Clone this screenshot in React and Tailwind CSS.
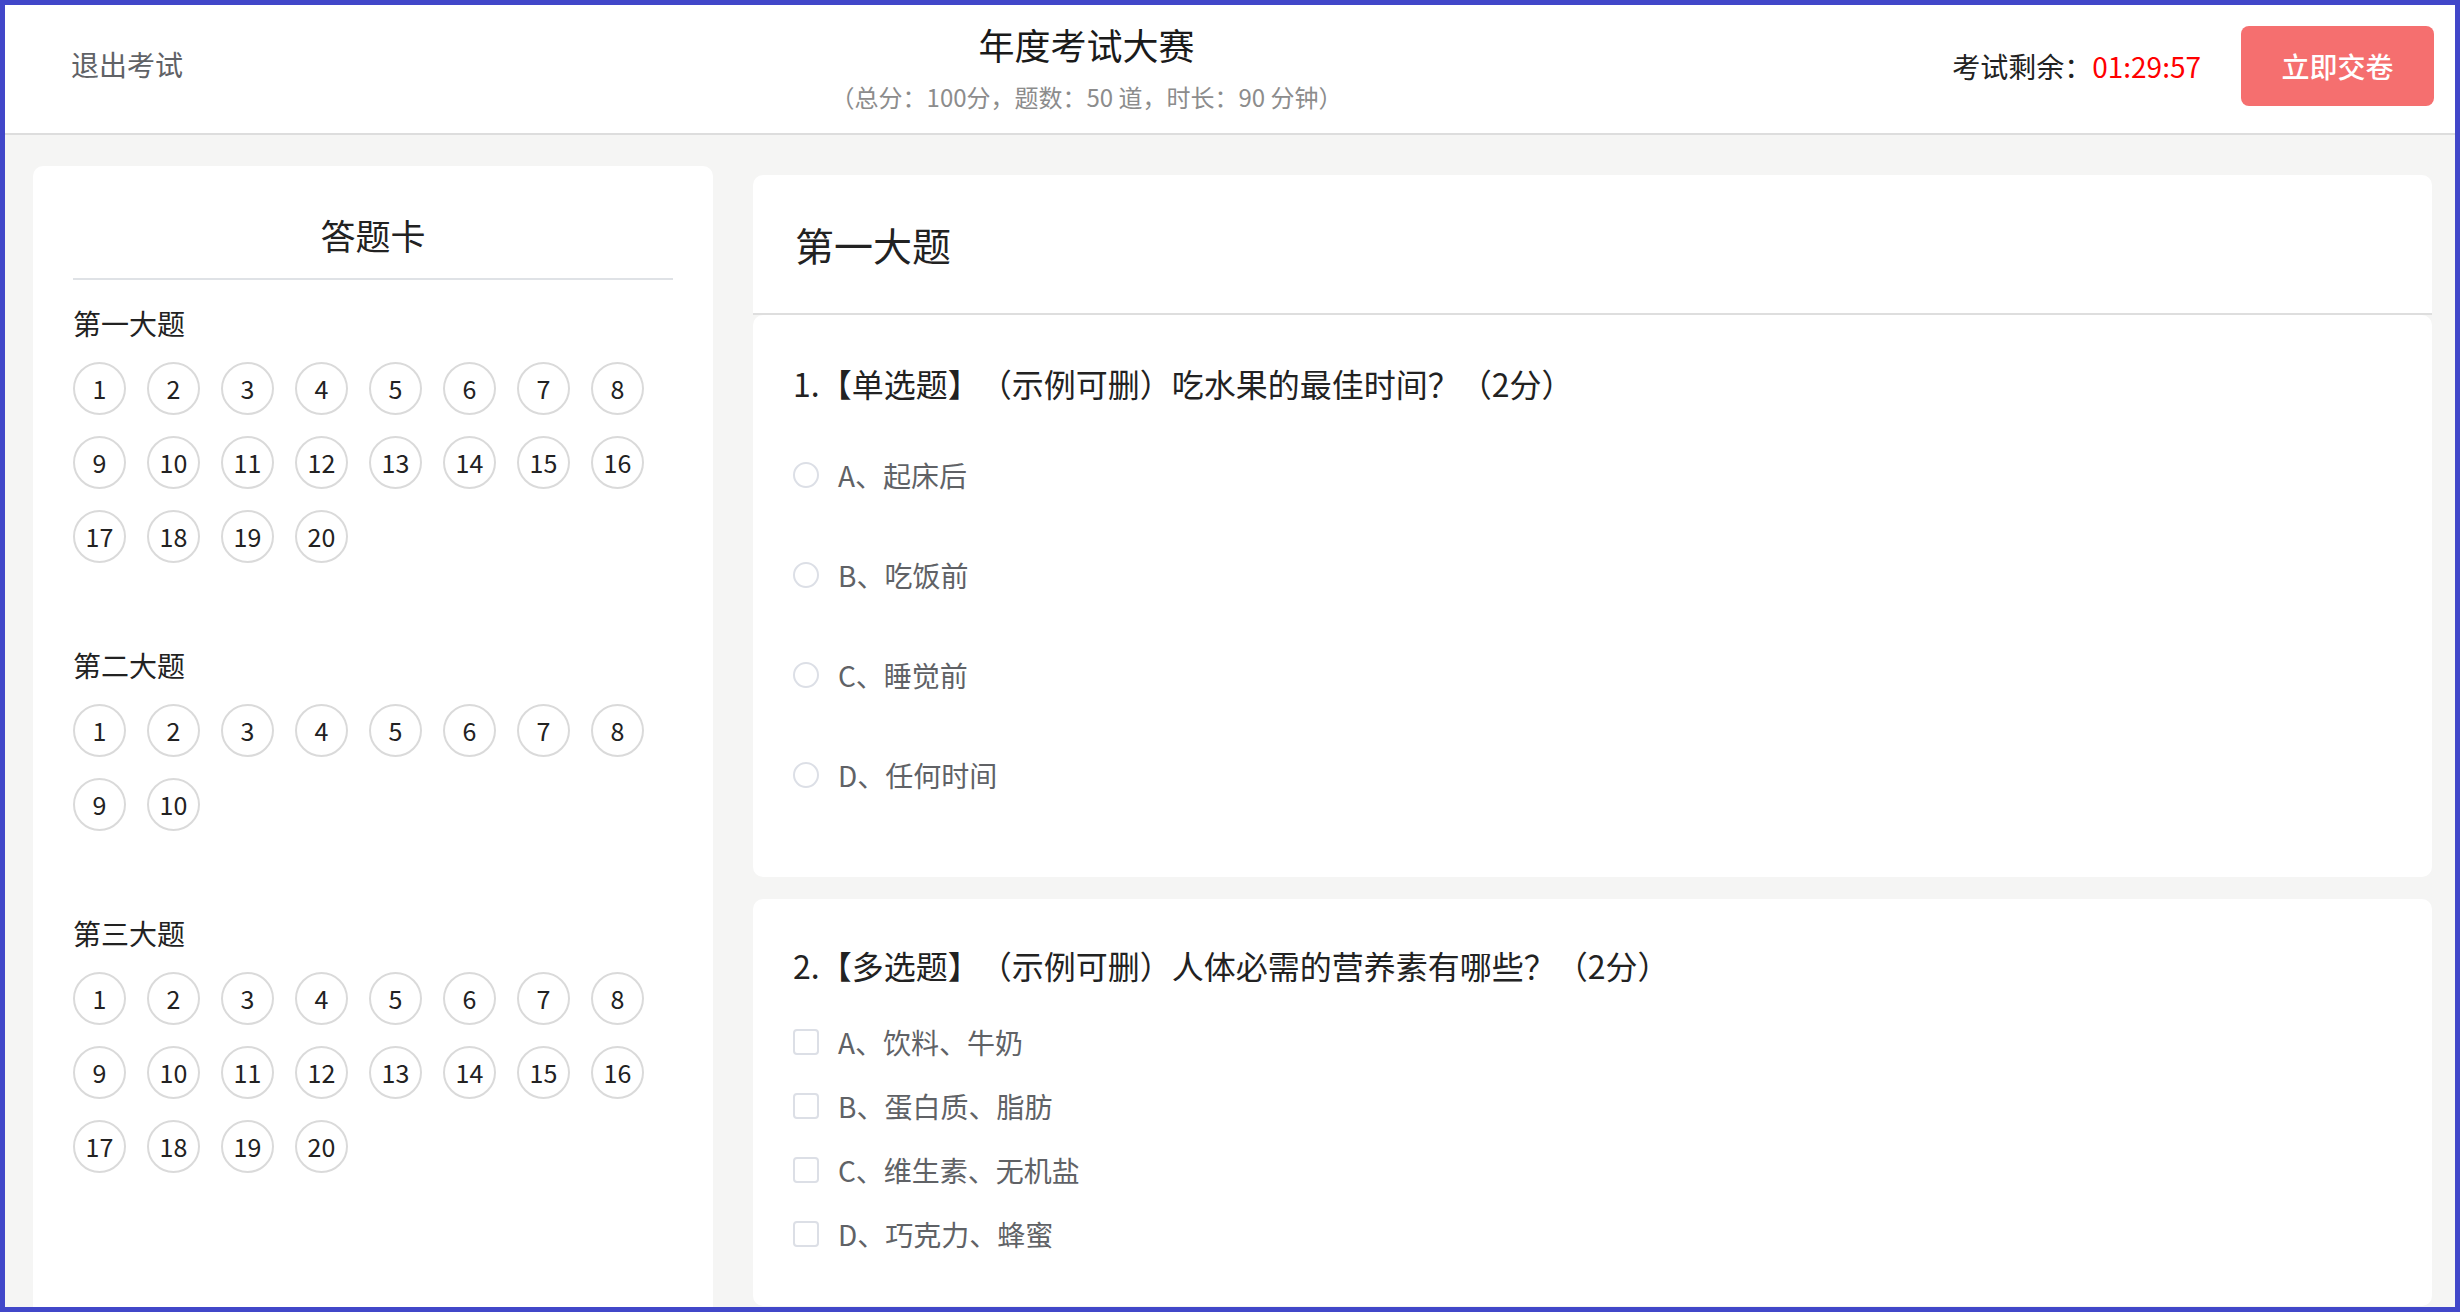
import React from 'react';

const sections = [
  { title: '第一大题', count: 20 },
  { title: '第二大题', count: 10 },
  { title: '第三大题', count: 20 },
];

const singleOptions = ['A、起床后', 'B、吃饭前', 'C、睡觉前', 'D、任何时间'];
const multiOptions = ['A、饮料、牛奶', 'B、蛋白质、脂肪', 'C、维生素、无机盐', 'D、巧克力、蜂蜜'];

const AnswerCard = () => (
  <div className="w-[680px] h-[1200px] shrink-0 mt-[31px] bg-white rounded-[10px] px-[40px] pt-[50px]">
    <h2 className="text-center text-[35px] leading-[38px] text-[#222]">答题卡</h2>
    <div className="mt-[24px] h-[2px] bg-[#dfe2e6]" />
    <div className="mt-[29px] flex flex-col gap-[88px]">
      {sections.map((sec) => (
        <div key={sec.title}>
          <div className="text-[28px] leading-[28px] text-[#222]">{sec.title}</div>
          <div className="mt-[25px] grid grid-cols-[repeat(8,53px)] gap-[21px]">
            {Array.from({ length: sec.count }, (_, i) => (
              <button
                key={i}
                className="w-[53px] h-[53px] rounded-full border-2 border-[#dadada] bg-white flex items-center justify-center text-[25px] leading-none text-[#222]"
              >
                {i + 1}
              </button>
            ))}
          </div>
        </div>
      ))}
    </div>
  </div>
);

const Radio = () => (
  <span className="w-[26px] h-[26px] rounded-full border-2 border-[#dcdfe6] bg-white shrink-0" />
);

const Checkbox = () => (
  <span className="w-[26px] h-[26px] rounded-[4px] border-2 border-[#dcdfe6] bg-white shrink-0" />
);

const QuestionPanel = () => (
  <div className="flex-1 mt-[40px] flex flex-col">
    <div className="h-[138px] bg-white rounded-t-[10px] flex items-center pl-[42px]">
      <h3 className="text-[39px] leading-[39px] text-[#222]">第一大题</h3>
    </div>
    <div className="h-[2px] bg-[#dedede]" />
    <div className="bg-white rounded-[10px] px-[40px] pt-[52px] pb-[52px]">
      <p className="text-[32px] leading-[32px] text-[#222]">1.【单选题】（示例可删）吃水果的最佳时间？（2分）</p>
      <div className="mt-[26px]">
        {singleOptions.map((opt) => (
          <label key={opt} className="h-[100px] flex items-center gap-[19px]">
            <Radio />
            <span className="text-[28px] leading-[28px] text-[#606266]">{opt}</span>
          </label>
        ))}
      </div>
    </div>
    <div className="mt-[22px] bg-white rounded-[10px] px-[40px] pt-[50px] pb-[40px]">
      <p className="text-[32px] leading-[32px] text-[#222]">2.【多选题】（示例可删）人体必需的营养素有哪些？（2分）</p>
      <div className="mt-[29px]">
        {multiOptions.map((opt) => (
          <label key={opt} className="h-[64px] flex items-center gap-[19px]">
            <Checkbox />
            <span className="text-[28px] leading-[28px] text-[#606266]">{opt}</span>
          </label>
        ))}
      </div>
    </div>
  </div>
);

export default function App() {
  return (
    <div className="h-[1312px] overflow-hidden border-[5px] border-[#4147c9] bg-[#f5f5f4] font-['Noto_Sans_CJK_SC','Noto_Sans',sans-serif] [text-spacing-trim:space-all] flex flex-col">
      <header className="h-[130px] shrink-0 bg-white border-b-2 border-[#dddddd] flex items-center">
        <div className="w-[216px] pl-[66px] -mt-[10px] text-[28px] leading-[28px] text-[#606266] cursor-pointer">退出考试</div>
        <div className="flex-1 self-start pt-[21px] text-center">
          <h1 className="text-[36px] leading-[36px] text-[#1a1a1a]">年度考试大赛</h1>
          <p className="mt-[23px] text-[24px] leading-[24px] text-[#8c8c8c]">（总分：100分，题数：50 道，时长：90 分钟）</p>
        </div>
        <div className="flex items-center pr-[21px] -mt-[6px]">
          <span className="text-[28px] leading-[28px] text-[#222]">
            考试剩余：<span className="text-[#ff0000]">01:29:57</span>
          </span>
          <button className="ml-[40px] w-[193px] h-[80px] rounded-[8px] bg-[#f56f6f] text-white text-[28px] font-medium">立即交卷</button>
        </div>
      </header>
      <main className="flex-1 min-h-0 overflow-hidden flex items-start gap-[40px] pl-[28px] pr-[23px]">
        <AnswerCard />
        <QuestionPanel />
      </main>
    </div>
  );
}
